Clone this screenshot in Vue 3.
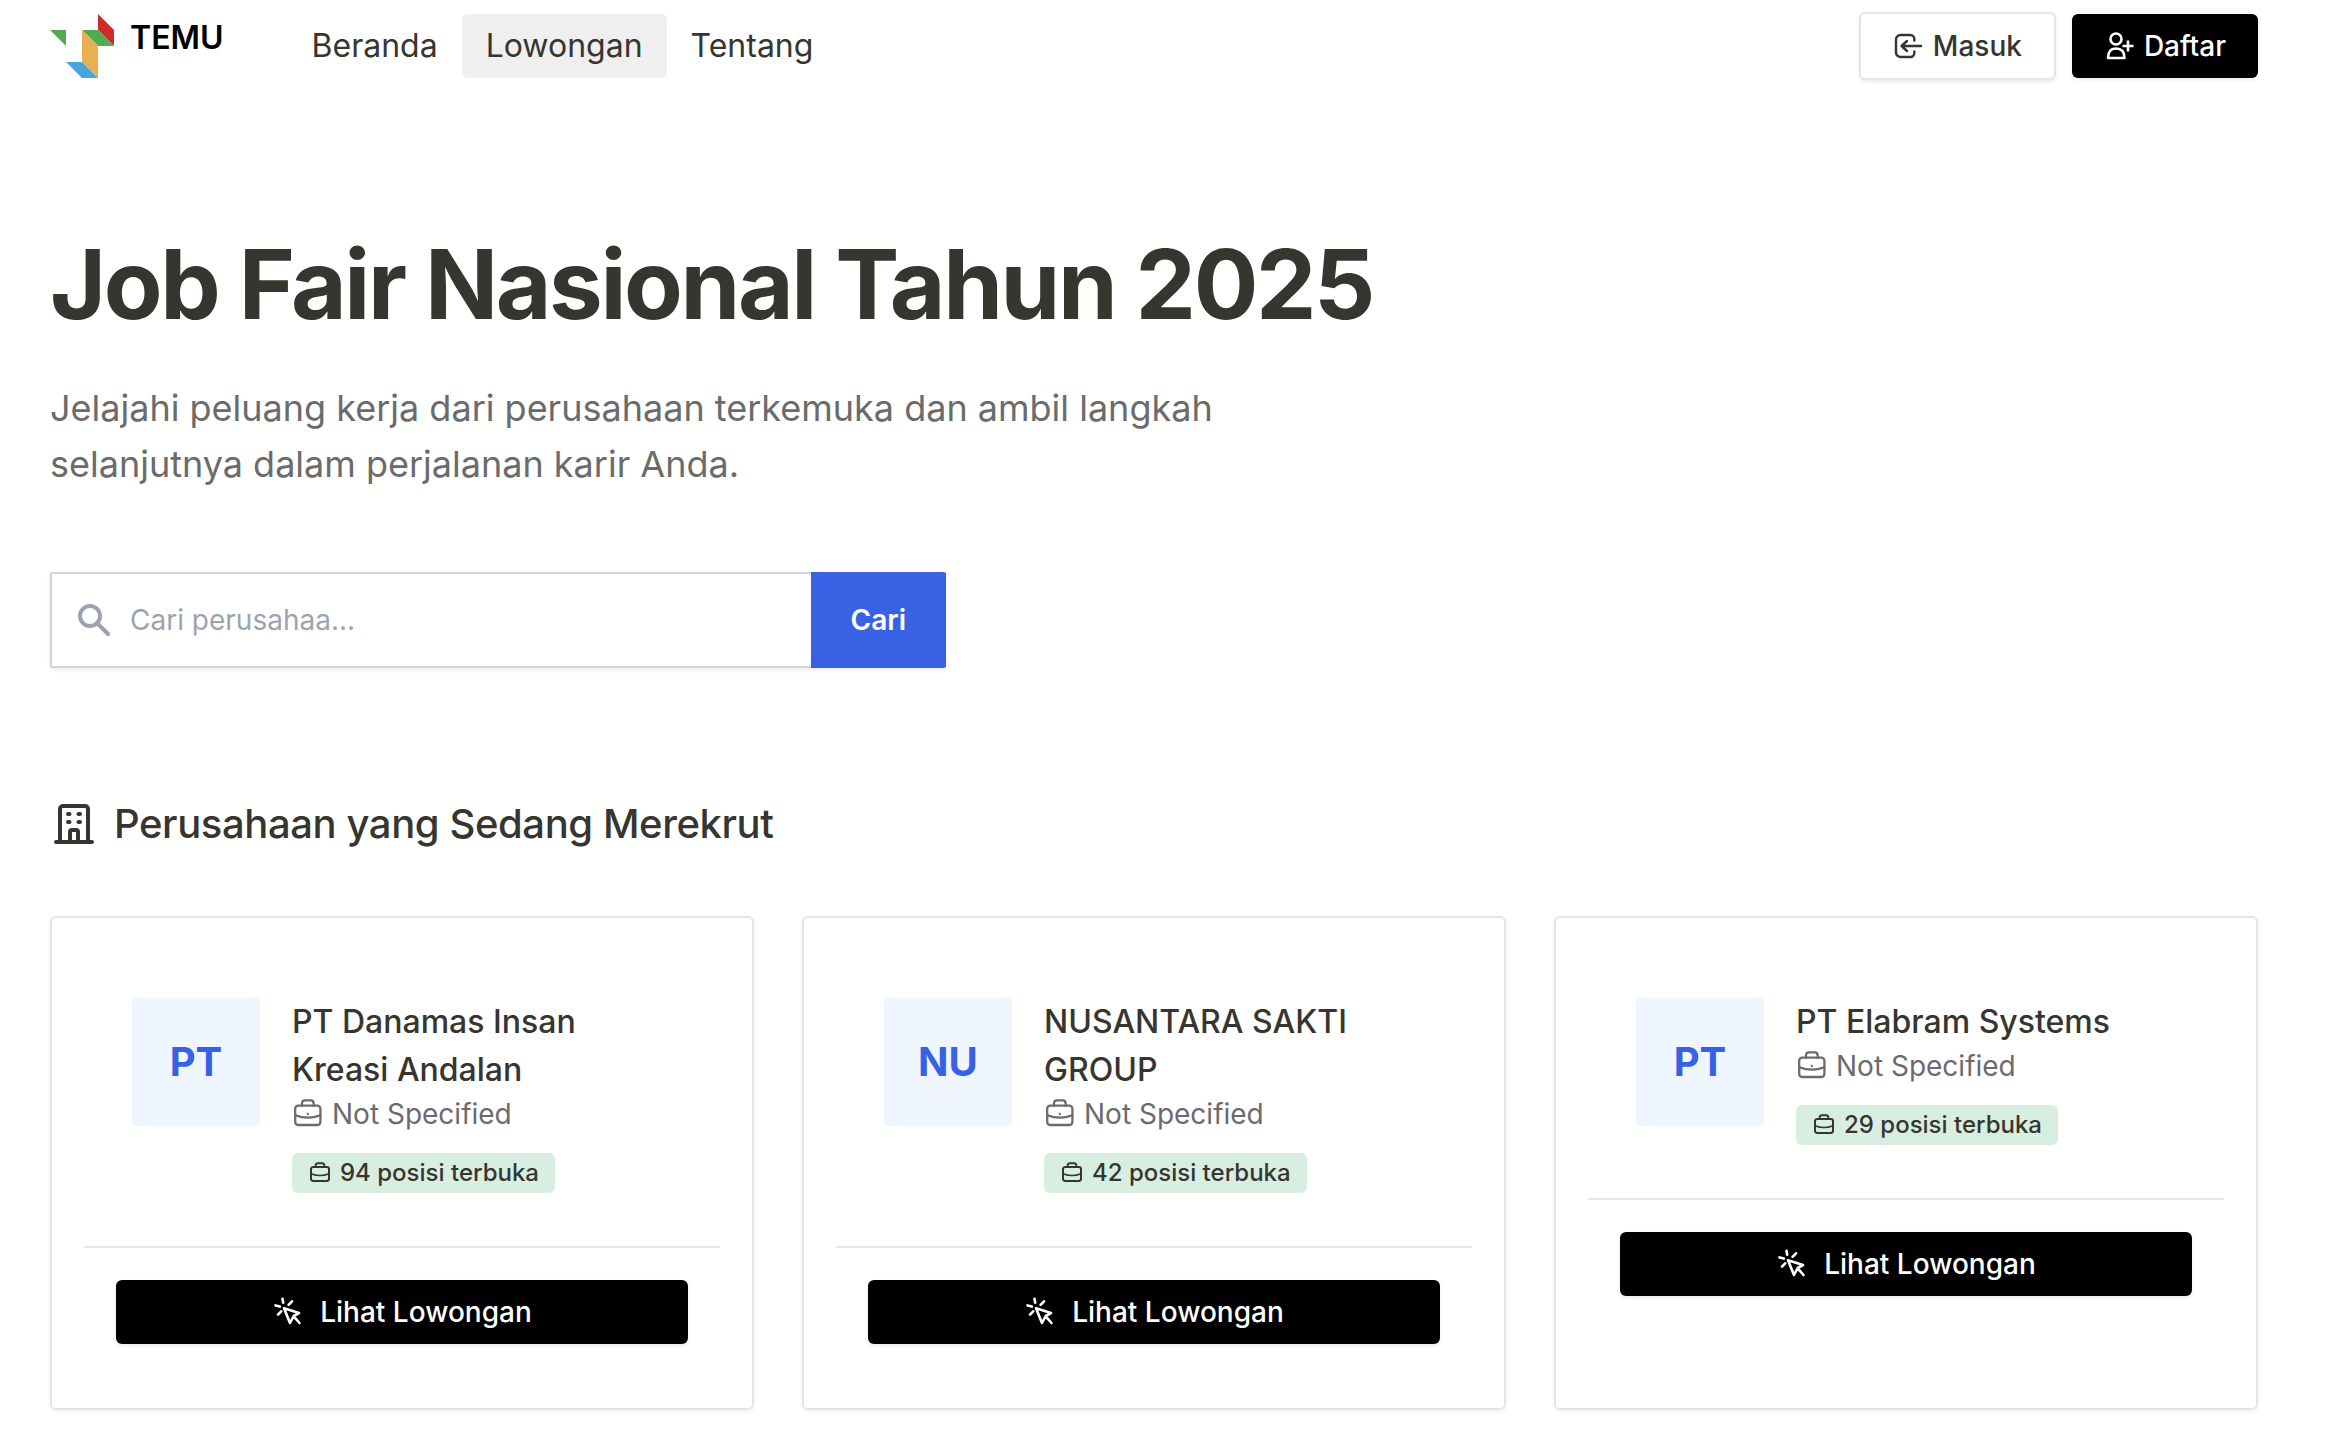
<script setup>
import { ref } from 'vue'

const query = ref('')
const menu = [
  { label: 'Beranda' },
  { label: 'Lowongan', active: true },
  { label: 'Tentang' },
]
const companies = [
  { name: 'PT Danamas Insan Kreasi Andalan', initials: 'PT', open: 94 },
  { name: 'NUSANTARA SAKTI GROUP', initials: 'NU', open: 42 },
  { name: 'PT Elabram Systems', initials: 'PT', open: 29 },
]
</script>

<template>
  <div class="page">
    <header class="topbar">
      <a class="brand" href="#">
        <svg class="logo" viewBox="0 0 64 64" aria-hidden="true">
          <path d="M0 16h16v16z" fill="#4fac50" />
          <path d="M48 0l16 16v16L48 16z" fill="#cf2a27" />
          <path d="M32 16h16l16 16H48z" fill="#4fac50" />
          <path d="M32 16l16 16v32L32 48z" fill="#e8b04e" />
          <path d="M16 48h16l16 16H32z" fill="#48a5de" />
        </svg>
        <span class="brand-name">TEMU</span>
      </a>
      <nav class="menu">
        <a v-for="item in menu" :key="item.label" href="#" class="menu-link" :class="{ active: item.active }">{{ item.label }}</a>
      </nav>
      <div class="actions">
        <button type="button" class="btn btn-outline">
          <svg class="icon-28" viewBox="0 0 28 28" fill="none" stroke="currentColor" stroke-width="2.400" stroke-linecap="round" stroke-linejoin="round" aria-hidden="true">
            <path d="M21.300 8.500V7A4 4 0 0 0 17.300 3H7.500A4.500 4.500 0 0 0 3 7.500v13A4.500 4.500 0 0 0 7.500 25h9.800a4 4 0 0 0 4-4V19.500M28 14H9M14 9l-5.500 5 5.500 5" />
          </svg>
          Masuk
        </button>
        <button type="button" class="btn btn-dark">
          <svg class="icon-28" viewBox="0 0 28 28" fill="none" stroke="currentColor" stroke-width="2.600" stroke-linejoin="round" aria-hidden="true">
            <circle cx="12" cy="7" r="5.500" />
            <path d="M4 26C4 19.500 7 16.500 12 16.500S20.500 19.500 20.500 26zM18.500 14h11M24 8.500v11" />
          </svg>
          Daftar
        </button>
      </div>
    </header>

    <main>
      <section class="hero">
        <h1>Job Fair Nasional Tahun 2025</h1>
        <p>Jelajahi peluang kerja dari perusahaan terkemuka dan ambil langkah selanjutnya dalam perjalanan karir Anda.</p>
        <form class="search" role="search" @submit.prevent>
          <label class="field">
            <svg class="icon-32" viewBox="0 0 32 32" fill="none" stroke="currentColor" stroke-width="4" aria-hidden="true">
              <circle cx="12" cy="12" r="10" />
              <path d="M19 19l11 11" stroke-linecap="round" />
            </svg>
            <input v-model="query" type="text" placeholder="Cari perusahaa..." aria-label="Cari perusahaan" />
          </label>
          <button type="submit">Cari</button>
        </form>
      </section>

      <section>
        <h2>
          <svg class="icon-40" viewBox="0 0 40 40" fill="none" stroke="currentColor" stroke-width="4" stroke-linecap="round" stroke-linejoin="round" aria-hidden="true">
            <path d="M2 38h36M6 37V5a3 3 0 0 1 3-3h22a3 3 0 0 1 3 3v32" />
            <path d="M16 37v-9a2 2 0 0 1 2-2h4a2 2 0 0 1 2 2v9" />
            <path d="M14 10h1.500M24.500 10h1.500M14 18h1.500M24.500 18h1.500" />
          </svg>
          Perusahaan yang Sedang Merekrut
        </h2>
        <div class="cards">
          <article v-for="company in companies" :key="company.name" class="card">
            <div class="summary">
              <div class="avatar">{{ company.initials }}</div>
              <div class="details">
                <h3>{{ company.name }}</h3>
                <p class="sector">
                  <svg class="icon-28" viewBox="0 0 28 28" fill="none" stroke="currentColor" stroke-width="2.300" stroke-linejoin="round" stroke-linecap="round" aria-hidden="true">
                    <rect x="1.200" y="5.600" width="25.200" height="19.400" rx="3" />
                    <path d="M8 5.500V3.200A2.800 2.800 0 0 1 10.800.400h6A2.800 2.800 0 0 1 19.600 3.200v2.300M1.200 15.200q12.600 5 25.200 0M13.800 14v.1" />
                  </svg>
                  Not Specified
                </p>
                <span class="badge">
                  <svg class="icon-20" viewBox="0 0 28 28" fill="none" stroke="currentColor" stroke-width="2.800" stroke-linejoin="round" aria-hidden="true">
                    <rect x="1.400" y="5.600" width="25.200" height="19.600" rx="3" />
                    <path d="M8 5.500V3.200A2.800 2.800 0 0 1 10.800.200h6.400A2.800 2.800 0 0 1 20 3.200v2.300" />
                    <path d="M1.400 15q12.600 5 25.200 0" stroke-width="2" />
                  </svg>
                  {{ company.open }} posisi terbuka
                </span>
              </div>
            </div>
            <div class="card-action">
              <button type="button" class="btn btn-dark btn-wide">
                <svg class="icon-28" viewBox="0 0 28 28" fill="none" stroke="currentColor" stroke-width="2.600" stroke-linecap="round" stroke-linejoin="round" aria-hidden="true">
                  <path d="M12 10.200l15 4.800-5.300 3L18 25zM21.700 18.300l5.800 6.700M10.500.700l.7 4M3.500 7.400l4.300 1.200M20 3.300L16.600 6.900M6 16.600l3.200-3.300" />
                </svg>
                Lihat Lowongan
              </button>
            </div>
          </article>
        </div>
      </section>
    </main>
  </div>
</template>

<style>
body {
  margin: 0;
  background: #fff;
}
</style>

<style scoped>
.page {
  box-sizing: border-box;
  padding: 0 80px 28px 50px;
  color: #37352f;
  font-family: Inter, "Liberation Sans", sans-serif;
  font-size: 28px;
  line-height: 40px;
}
.page *,
.page *::before {
  box-sizing: border-box;
}
h1, h2, h3, p {
  margin: 0;
}
a {
  color: inherit;
  text-decoration: none;
}
button,
input {
  font: inherit;
}
svg {
  display: block;
  flex: none;
  overflow: visible;
}
.icon-20 { width: 20px; height: 20px; }
.icon-28 { width: 28px; height: 28px; }
.icon-32 { width: 32px; height: 32px; }
.icon-40 { width: 40px; height: 40px; }

.topbar {
  display: flex;
  align-items: center;
  height: 92px;
}
.brand {
  display: flex;
  color: #000;
}
.logo {
  width: 64px;
  height: 64px;
}
.brand-name {
  margin-left: 16px;
  font-size: 32px;
  line-height: 48px;
  font-weight: 600;
}
.menu {
  display: flex;
  margin-left: 64px;
}
.menu-link {
  padding: 8px 24px;
  border-radius: 6px;
  font-size: 32px;
  line-height: 48px;
}
.menu-link.active {
  background: #efefef;
}
.actions {
  display: flex;
  align-items: center;
  gap: 16px;
  margin-left: auto;
}
.btn {
  display: flex;
  align-items: center;
  justify-content: center;
  gap: 12px;
  height: 64px;
  padding: 0 32px;
  border: 0;
  border-radius: 6px;
  font-weight: 500;
  box-shadow: 0 2px 4px rgba(0, 0, 0, 0.08);
}
.btn-outline {
  height: 68px;
  border: 2px solid #e5e5e5;
  background: #fff;
  color: #37352f;
}
.btn-dark {
  background: #000;
  color: #fff;
}
.btn-wide {
  width: 100%;
  gap: 20px;
}

.hero {
  padding-top: 144px;
}
h1 {
  font-size: 96px;
  line-height: 96px;
  font-weight: 700;
  letter-spacing: -0.025em;
}
.hero p {
  max-width: 1344px;
  margin-top: 48px;
  color: #6b6b6b;
  font-size: 36px;
  line-height: 56px;
}
.search {
  display: flex;
  width: 896px;
  height: 96px;
  margin-top: 80px;
  border-radius: 4px;
  box-shadow: 0 2px 4px rgba(0, 0, 0, 0.08);
}
.field {
  display: flex;
  flex: 1;
  align-items: center;
  gap: 20px;
  padding-left: 26px;
  border: 2px solid #d1d5db;
  border-right: 0;
  border-radius: 2px 0 0 2px;
  color: #9ca3af;
}
.field input {
  flex: 1;
  min-width: 0;
  padding: 0;
  border: 0;
  outline: 0;
  background: transparent;
  color: #37352f;
}
.field input::placeholder {
  color: #9ca3af;
  opacity: 1;
}
.search button {
  padding: 0 40px;
  border: 0;
  border-radius: 0 2px 2px 0;
  background: #3862e3;
  color: #fff;
  font-weight: 600;
}

h2 {
  display: flex;
  align-items: center;
  gap: 20px;
  margin: 128px 0 64px;
  padding-left: 4px;
  font-size: 40px;
  line-height: 56px;
  font-weight: 500;
  letter-spacing: -0.01em;
}
.cards {
  display: grid;
  grid-template-columns: repeat(3, 1fr);
  gap: 48px;
}
.card {
  padding: 32px 32px 64px;
  border: 2px solid #e5e5e5;
  border-radius: 6px;
  box-shadow: 0 2px 4px rgba(0, 0, 0, 0.06);
}
.summary {
  display: flex;
  gap: 32px;
  padding: 48px;
}
.avatar {
  display: flex;
  flex: none;
  align-items: center;
  justify-content: center;
  width: 128px;
  height: 128px;
  border-radius: 2px;
  background: #eff6ff;
  color: #3862e3;
  font-size: 40px;
  font-weight: 700;
}
.details {
  flex: 1;
  min-width: 0;
  padding-bottom: 5px;
}
h3 {
  font-size: 32px;
  line-height: 48px;
  font-weight: 500;
}
.sector {
  display: flex;
  align-items: center;
  gap: 10px;
  color: #6b6b6b;
}
.sector svg {
  margin-left: 2px;
}
.badge {
  display: flex;
  align-items: center;
  gap: 10px;
  width: fit-content;
  height: 40px;
  margin-top: 19px;
  padding: 0 16px 0 18px;
  border-radius: 6px;
  background: #d7eee1;
  font-size: 24px;
  font-weight: 500;
}
.card-action {
  padding: 32px 32px 0;
  border-top: 2px solid #e5e5e5;
}
</style>
